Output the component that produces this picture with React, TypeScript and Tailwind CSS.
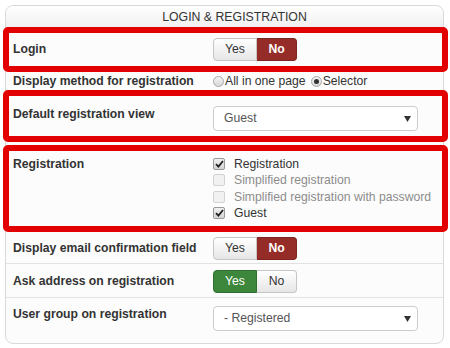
import React from 'react'

const font = { fontFamily: '"Liberation Sans", Arial, sans-serif' }

function Toggle({ value, tone }: { value: 'yes' | 'no'; tone: 'red' | 'green' }) {
  const base = 'h-full flex items-center justify-center border text-[12.2px]'
  const idle = 'bg-gradient-to-b from-white to-[#e6e6e6] border-[#c5c5c5] text-[#333]'
  const on =
    tone === 'red'
      ? 'bg-[#952c27] border-[#7d2420] text-white font-bold'
      : 'bg-[#3d873d] border-[#2f6e2f] text-white'
  return (
    <div className="flex h-[23px]">
      <div className={`${base} w-[44px] rounded-l-[4px] ${value === 'yes' ? on : idle}`}>Yes</div>
      <div className={`${base} w-[40px] rounded-r-[4px] border-l-0 ${value === 'no' ? on : idle}`}>No</div>
    </div>
  )
}

function Select({ text }: { text: string }) {
  return (
    <div className="w-[205px] h-[25px] border border-[#ccc] rounded-[4px] bg-white flex items-center justify-between pl-[10px] pr-[6px] text-[12.2px] text-[#555]">
      <span>{text}</span>
      <svg width="7" height="6" viewBox="0 0 7 6">
        <path d="M0 0 L7 0 L3.5 6 Z" fill="#333" />
      </svg>
    </div>
  )
}

function Radio({ checked }: { checked?: boolean }) {
  return (
    <span className="w-[11px] h-[11px] rounded-full border border-[#a8a8a8] bg-gradient-to-b from-[#f4f4f4] to-[#d8d8d8] flex items-center justify-center mr-px">
      {checked && <span className="w-[5px] h-[5px] rounded-full bg-[#333]" />}
    </span>
  )
}

function Check({ checked, disabled, label }: { checked?: boolean; disabled?: boolean; label: string }) {
  return (
    <div className="flex items-center h-[16.3px]">
      <span
        className={`w-[12px] h-[12px] rounded-[2px] border flex items-center justify-center mr-[9px] ${
          disabled ? 'border-[#d2d2d2] bg-[#f1f1f1]' : 'border-[#9a9a9a] bg-gradient-to-b from-[#f0f0f0] to-[#d4d4d4]'
        }`}
      >
        {checked && (
          <svg width="9" height="8" viewBox="0 0 9 8">
            <path d="M1 4.2 L3.4 6.6 L8 1" stroke="#222" strokeWidth="1.8" fill="none" />
          </svg>
        )}
      </span>
      <span className={disabled ? 'text-[#8c8c8c]' : 'text-[#333]'}>{label}</span>
    </div>
  )
}

export default function App() {
  return (
    <div className="w-[450px] h-[348px] bg-white pt-[5px] pl-[5px]" style={font}>
      <div className="w-[439px] h-[339px] border border-[#d9d9d9] rounded-[8px] bg-[#fcfcfc] text-[12.2px] text-[#333]">
        {/* header */}
        <div className="h-[21px] rounded-t-[8px] bg-gradient-to-b from-white to-[#f0f0f0] flex items-center justify-center pl-[20px] pt-[2px] text-[12.3px] text-[#333]">
          LOGIN &amp; REGISTRATION
        </div>

        {/* Login */}
        <div className="h-[45px] ml-[-3px] mr-[-5px] border-[6px] border-[#e30000] rounded-[5px] flex items-center">
          <div className="w-[204px] pl-[4px] font-bold">Login</div>
          <Toggle value="no" tone="red" />
        </div>

        {/* Display method */}
        <div className="h-[18px] flex items-center">
          <div className="w-[207px] pl-[7px] font-bold">Display method for registration</div>
          <div className="flex items-center">
            <Radio />
            <span>All in one page</span>
            <span className="ml-[5px]" />
            <Radio checked />
            <span>Selector</span>
          </div>
        </div>

        {/* Default registration view */}
        <div className="h-[52px] ml-[-3px] mr-[-5px] border-[6px] border-[#e30000] rounded-[5px] flex items-start pt-[10px]">
          <div className="w-[204px] pl-[4px] font-bold leading-[15px] pt-[1px]">Default registration view</div>
          <Select text="Guest" />
        </div>

        {/* Registration */}
        <div className="h-[87px] mt-[3px] ml-[-3px] mr-[-5px] border-[6px] border-[#e30000] rounded-[5px] flex items-start pt-[5px]">
          <div className="w-[204px] pl-[4px] font-bold leading-[16px]">Registration</div>
          <div className="flex flex-col">
            <Check checked label="Registration" />
            <Check disabled label="Simplified registration" />
            <Check disabled label="Simplified registration with password" />
            <Check checked label="Guest" />
          </div>
        </div>

        {/* Display email */}
        <div className="h-[32px] flex items-center border-b border-[#e2e2e2] pt-[2px]">
          <div className="w-[207px] pl-[7px] font-bold">Display email confirmation field</div>
          <Toggle value="no" tone="red" />
        </div>

        {/* Ask address */}
        <div className="h-[34px] flex items-center border-b border-[#e2e2e2] pt-[2px]">
          <div className="w-[207px] pl-[7px] font-bold">Ask address on registration</div>
          <Toggle value="yes" tone="green" />
        </div>

        {/* User group */}
        <div className="flex items-start pt-[8px]">
          <div className="w-[207px] pl-[7px] font-bold leading-[15px] pt-[1px]">User group on registration</div>
          <Select text="- Registered" />
        </div>
      </div>
    </div>
  )
}
